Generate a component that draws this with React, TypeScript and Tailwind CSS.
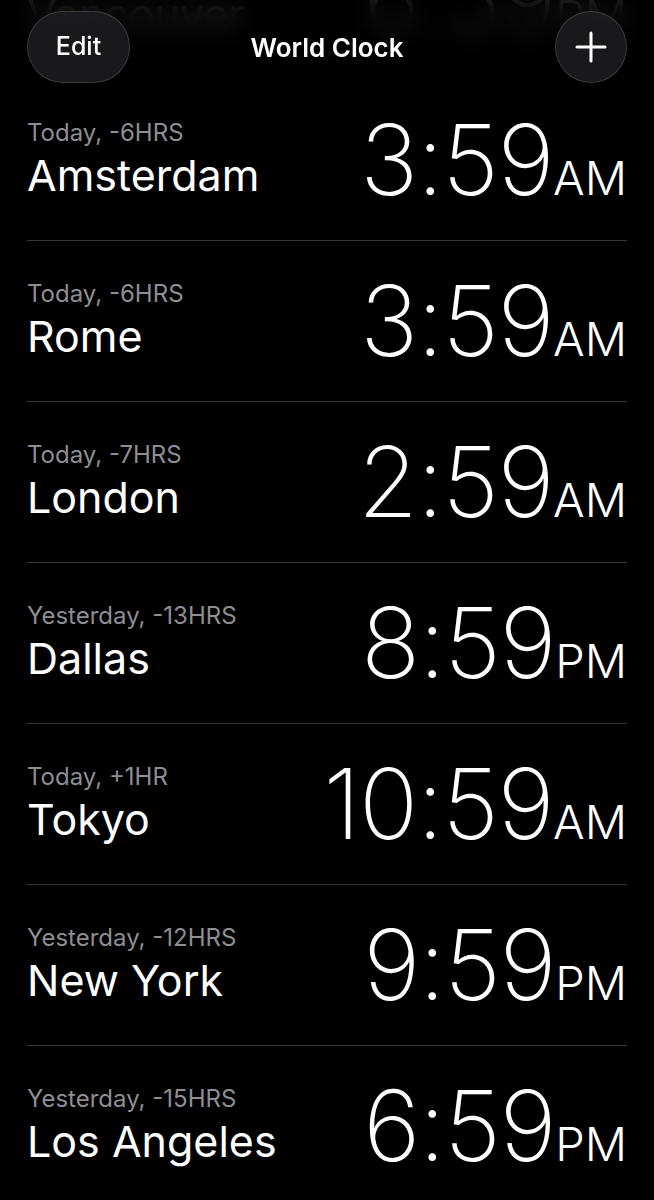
import React from "react";

type Row = { sub: string; city: string; time: string; ampm: string };

const rows: Row[] = [
  { sub: "Yesterday, -15HRS", city: "Vancouver", time: "6:59", ampm: "PM" },
  { sub: "Today, -6HRS", city: "Amsterdam", time: "3:59", ampm: "AM" },
  { sub: "Today, -6HRS", city: "Rome", time: "3:59", ampm: "AM" },
  { sub: "Today, -7HRS", city: "London", time: "2:59", ampm: "AM" },
  { sub: "Yesterday, -13HRS", city: "Dallas", time: "8:59", ampm: "PM" },
  { sub: "Today, +1HR", city: "Tokyo", time: "10:59", ampm: "AM" },
  { sub: "Yesterday, -12HRS", city: "New York", time: "9:59", ampm: "PM" },
  { sub: "Yesterday, -15HRS", city: "Los Angeles", time: "6:59", ampm: "PM" },
];

function ClockRow({ r }: { r: Row }) {
  return (
    <div className="mx-[27px] h-[161px] border-b border-[#38383a] flex items-start justify-between">
      <div className="pt-[39px] flex flex-col">
        <div className="text-[24px] leading-[28px] text-[#8e8e93]">{r.sub}</div>
        <div className="mt-[3px] text-[43px] leading-[50px] text-white">{r.city}</div>
      </div>
      <div className="pt-[31px] flex items-baseline text-white">
        <span className="text-[98px] leading-none font-extralight tracking-[-1.5px]">{r.time}</span>
        <span className="text-[47px] leading-none font-light">{r.ampm}</span>
      </div>
    </div>
  );
}

export default function App() {
  return (
    <div className="relative w-[654px] h-[1200px] overflow-hidden bg-black font-['Inter',sans-serif]">
      <div className="-mt-[81px]">
        {rows.map((r, i) => (
          <ClockRow key={i} r={r} />
        ))}
      </div>
      <header className="absolute inset-x-0 top-0 h-[94px] bg-black/85 backdrop-blur-md grid grid-cols-[1fr_auto_1fr] items-center px-[27px]">
        <button className="justify-self-start w-[103px] h-[72px] rounded-full bg-[#1c1c1e]/90 border border-white/15 text-white text-[25px] font-medium">
          Edit
        </button>
        <div className="text-white text-[26px] font-semibold">World Clock</div>
        <button className="justify-self-end w-[72px] h-[72px] rounded-full bg-[#1c1c1e]/90 border border-white/15 flex items-center justify-center">
          <svg width="32" height="32" viewBox="0 0 32 32" fill="none">
            <path d="M16 2v28M2 16h28" stroke="white" strokeWidth="3" strokeLinecap="round" />
          </svg>
        </button>
      </header>
    </div>
  );
}
